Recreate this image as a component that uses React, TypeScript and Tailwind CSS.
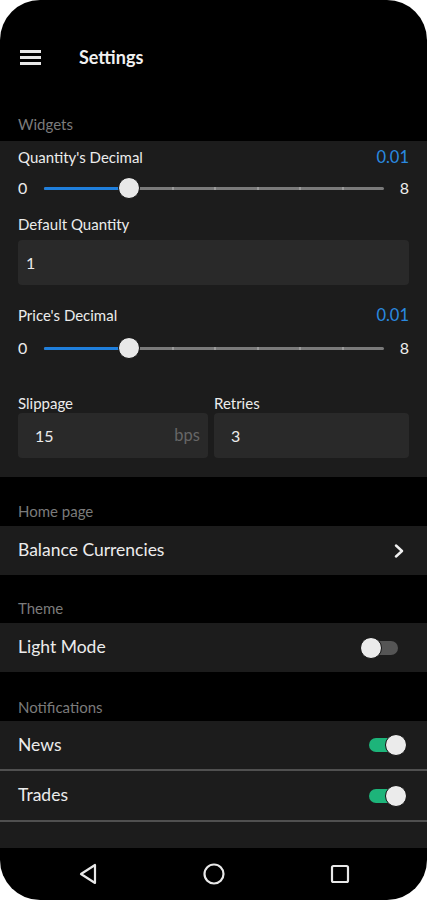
import React from "react";

const font = { fontFamily: "Lato, 'Noto Sans', sans-serif" };

function Slider({ pos }: { pos: number }) {
  const ticks = [0, 1, 2, 3, 4, 5, 6, 7, 8];
  return (
    <div className="flex items-center h-full">
      <span className="w-[26px] text-[16px] text-[#ececec]">0</span>
      <div className="relative flex-1 h-[3px] bg-[#7a7a7a] rounded-full">
        <div className="absolute left-0 top-0 h-[3px] bg-[#1f7fdc] rounded-full" style={{ width: `${(pos / 8) * 100}%` }} />
        {ticks.slice(1, 8).map((t) =>
          t > pos ? (
            <div key={t} className="absolute top-0 w-[2px] h-[3px] bg-[#9a9a9a]" style={{ left: `${(t / 8) * 100}%` }} />
          ) : null
        )}
        <div
          className="absolute top-1/2 w-[22px] h-[22px] -translate-x-1/2 -translate-y-1/2 rounded-full bg-[#e8e8e8] border border-[#111]"
          style={{ left: `${(pos / 8) * 100}%` }}
        />
      </div>
      <span className="w-[25px] text-right text-[16px] text-[#ececec]">8</span>
    </div>
  );
}

function Toggle({ on }: { on: boolean }) {
  return (
    <div className="relative w-[36px] h-[14px]">
      <div className={`absolute inset-0 rounded-full ${on ? "bg-[#1db47a]" : "bg-[#555555]"}`} />
      <div
        className={`absolute top-1/2 -translate-y-1/2 w-[22px] h-[22px] rounded-full bg-[#ebebeb] border border-[#111] ${on ? "right-[-2px]" : "left-[-2px]"}`}
      />
    </div>
  );
}

function SectionLabel({ text, h, pb }: { text: string; h: string; pb: string }) {
  return (
    <div className={`${h} ${pb} flex items-end px-[18px]`}>
      <span className="text-[15px] leading-[18px] text-[#7b7b7b]">{text}</span>
    </div>
  );
}

export default function App() {
  return (
    <div className="w-[427px] h-[900px] bg-white overflow-hidden" style={font}>
      <div className="w-full h-full bg-black rounded-[40px] flex flex-col overflow-hidden">
        {/* Header */}
        <div className="h-[88px] pt-[45px] px-[20px]">
          <div className="h-[24px] flex items-center">
            <div className="w-[21px] flex flex-col gap-[3px]">
              <div className="h-[3px] bg-[#e8e8e8]" />
              <div className="h-[3px] bg-[#e8e8e8]" />
              <div className="h-[3px] bg-[#e8e8e8]" />
            </div>
            <span className="ml-[38px] text-[18px] font-bold text-[#f0f0f0]">Settings</span>
          </div>
        </div>

        <SectionLabel text="Widgets" h="h-[53px]" pb="pb-[8px]" />

        {/* Widgets panel */}
        <div className="bg-[#1c1c1c] px-[18px] flex flex-col">
          <div className="h-[32px] flex items-center justify-between">
            <span className="text-[15px] text-[#ececec]">Quantity's Decimal</span>
            <span className="text-[16.5px] text-[#2a8ae0]">0.01</span>
          </div>
          <div className="h-[30px]">
            <Slider pos={2} />
          </div>
          <div className="h-[37px] pt-[5px] flex items-center">
            <span className="text-[15px] text-[#ececec]">Default Quantity</span>
          </div>
          <div className="h-[45px] rounded-[4px] bg-[#292929] flex items-center px-[8px]">
            <span className="text-[16px] text-[#ececec]">1</span>
          </div>
          <div className="h-[46px] pt-[14px] flex items-center justify-between">
            <span className="text-[15px] text-[#ececec]">Price's Decimal</span>
            <span className="text-[16.5px] text-[#2a8ae0]">0.01</span>
          </div>
          <div className="h-[34px]">
            <Slider pos={2} />
          </div>
          <div className="h-[48px] pb-[1px] flex items-end">
            <span className="w-[196px] text-[15px] leading-[18px] text-[#ececec]">Slippage</span>
            <span className="text-[15px] leading-[18px] text-[#ececec]">Retries</span>
          </div>
          <div className="h-[45px] flex gap-[6px]">
            <div className="w-[190px] rounded-[4px] bg-[#292929] flex items-center justify-between pl-[17px] pr-[8px]">
              <span className="text-[16px] text-[#ececec]">15</span>
              <span className="text-[16.5px] text-[#666666]">bps</span>
            </div>
            <div className="flex-1 rounded-[4px] bg-[#292929] flex items-center pl-[17px]">
              <span className="text-[16px] text-[#ececec]">3</span>
            </div>
          </div>
          <div className="h-[19px]" />
        </div>

        <SectionLabel text="Home page" h="h-[49px]" pb="pb-[6px]" />
        <div className="h-[49px] bg-[#1c1c1c] flex items-center justify-between px-[18px]">
          <span className="text-[17.5px] text-[#ececec]">Balance Currencies</span>
          <svg width="12" height="14" viewBox="0 0 12 14" className="mr-[4px]">
            <polyline points="3,1.5 9,7 3,12.5" fill="none" stroke="#f0f0f0" strokeWidth="2.4" strokeLinecap="round" strokeLinejoin="round" />
          </svg>
        </div>

        <SectionLabel text="Theme" h="h-[48px]" pb="pb-[6px]" />
        <div className="h-[49px] bg-[#1c1c1c] flex items-center justify-between pl-[18px] pr-[29px]">
          <span className="text-[17.5px] text-[#ececec]">Light Mode</span>
          <Toggle on={false} />
        </div>

        <SectionLabel text="Notifications" h="h-[49px]" pb="pb-[5px]" />
        <div className="h-[48px] bg-[#1c1c1c] flex items-center justify-between pl-[18px] pr-[22px]">
          <span className="text-[17.5px] text-[#ececec]">News</span>
          <Toggle on={true} />
        </div>
        <div className="h-[2px] bg-[#505050]" />
        <div className="h-[49px] bg-[#1c1c1c] flex items-center justify-between pl-[18px] pr-[22px]">
          <span className="text-[17.5px] text-[#ececec]">Trades</span>
          <Toggle on={true} />
        </div>
        <div className="h-[2px] bg-[#505050]" />
        <div className="h-[26px] bg-[#1c1c1c]" />

        {/* Nav bar */}
        <div className="flex-1 flex items-center pl-[77px] gap-[104px]">
          <svg width="22" height="22" viewBox="0 0 22 22">
            <polygon points="18,2 18,20 4,11" fill="none" stroke="#e8e8e8" strokeWidth="2.2" strokeLinejoin="round" />
          </svg>
          <svg width="22" height="22" viewBox="0 0 22 22">
            <circle cx="11" cy="11" r="9.5" fill="none" stroke="#e8e8e8" strokeWidth="2.2" />
          </svg>
          <svg width="22" height="22" viewBox="0 0 22 22">
            <rect x="3" y="3" width="16" height="16" rx="1.5" fill="none" stroke="#e8e8e8" strokeWidth="2.2" />
          </svg>
        </div>
      </div>
    </div>
  );
}
